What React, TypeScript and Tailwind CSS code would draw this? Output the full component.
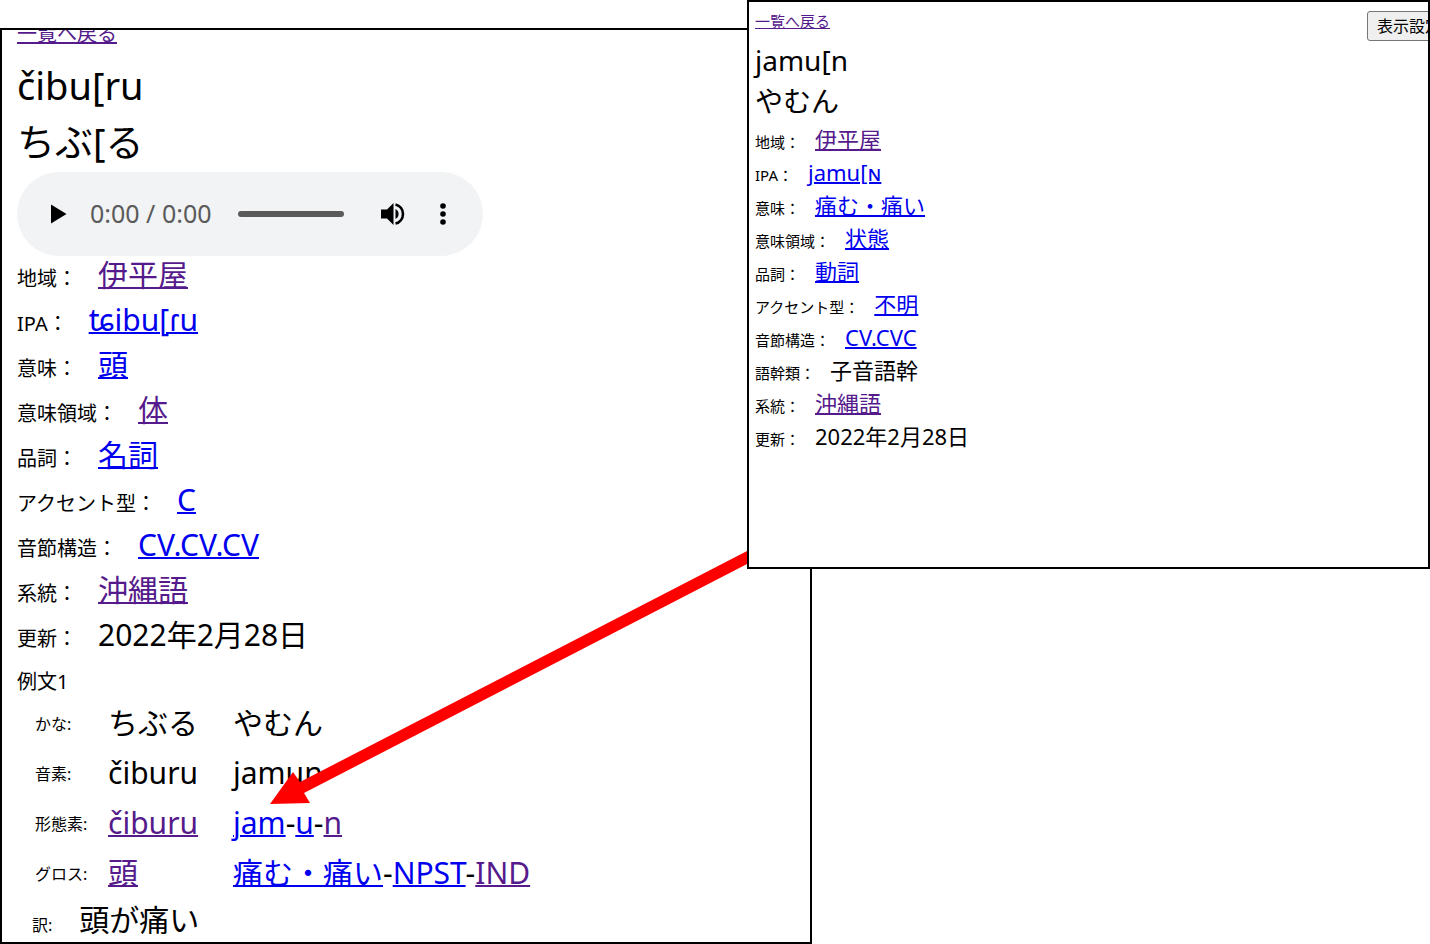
import React from "react";
import clsx from "clsx";

type Entry = {
  label: string;
  value: string;
  link?: "new" | "visited";
};

const chiburuEntries: Entry[] = [
  { label: "地域", value: "伊平屋", link: "visited" },
  { label: "IPA", value: "ʨibu[ɾu", link: "new" },
  { label: "意味", value: "頭", link: "new" },
  { label: "意味領域", value: "体", link: "visited" },
  { label: "品詞", value: "名詞", link: "new" },
  { label: "アクセント型", value: "C", link: "new" },
  { label: "音節構造", value: "CV.CV.CV", link: "new" },
  { label: "系統", value: "沖縄語", link: "visited" },
  { label: "更新", value: "2022年2月28日" },
];

const jamunEntries: Entry[] = [
  { label: "地域", value: "伊平屋", link: "visited" },
  { label: "IPA", value: "jamu[ɴ", link: "new" },
  { label: "意味", value: "痛む・痛い", link: "new" },
  { label: "意味領域", value: "状態", link: "new" },
  { label: "品詞", value: "動詞", link: "new" },
  { label: "アクセント型", value: "不明", link: "new" },
  { label: "音節構造", value: "CV.CVC", link: "new" },
  { label: "語幹類", value: "子音語幹" },
  { label: "系統", value: "沖縄語", link: "visited" },
  { label: "更新", value: "2022年2月28日" },
];

const WordLink = ({
  children,
  visited = false,
}: {
  children: React.ReactNode;
  visited?: boolean;
}) => (
  <a
    href="#"
    className={clsx("underline", visited ? "text-[#551a8b]" : "text-[#0000ee]")}
  >
    {children}
  </a>
);

const EntryList = ({
  entries,
  large = false,
}: {
  entries: Entry[];
  large?: boolean;
}) => (
  <dl className="[&_a]:decoration-2">
    {entries.map(({ label, value, link }) => (
      <div
        key={label}
        className={clsx(
          "flex items-baseline whitespace-nowrap",
          large
            ? "h-[45px] gap-[21px] leading-[45px]"
            : "h-[33px] gap-[15px] leading-[33px]"
        )}
      >
        <dt className={large ? "text-[20px]" : "text-[15px]"}>{label}：</dt>
        <dd className={large ? "text-[30px]" : "text-[22px]"}>
          {link ? (
            <WordLink visited={link === "visited"}>{value}</WordLink>
          ) : (
            value
          )}
        </dd>
      </div>
    ))}
  </dl>
);

const AudioPlayer = () => (
  <div className="flex h-[84px] w-[466px] items-center rounded-full bg-[#f1f3f4]">
    <button type="button" aria-label="再生" className="ml-[34px]">
      <svg width="16" height="20" viewBox="0 0 16 20">
        <path d="M0 0.5L15.5 10L0 19.5Z" fill="#000" />
      </svg>
    </button>
    <span className="ml-[23px] w-[148px] whitespace-nowrap pb-[3px] text-[25px] leading-[28px] text-[#5a5a5a]">
      0:00 / 0:00
    </span>
    <input
      type="range"
      aria-label="再生位置"
      min={0}
      max={100}
      defaultValue={0}
      className="h-[6px] w-[106px] appearance-none rounded-full bg-[#5a5a5a] [&::-webkit-slider-thumb]:appearance-none"
    />
    <button type="button" aria-label="音量" className="ml-[37px]">
      <svg width="25" height="24" viewBox="0 0 25 24">
        <path d="M0 7.5H6L12.5 1V23L6 16.5H0Z" fill="#000" />
        <path d="M14.5 7A5.6 5.6 0 0 1 14.5 17Z" fill="#000" />
        <path
          d="M14.5 2.4A9.9 9.9 0 0 1 14.5 21.6"
          fill="none"
          stroke="#000"
          strokeWidth="2.6"
        />
      </svg>
    </button>
    <button type="button" aria-label="メニュー" className="ml-[34px]">
      <svg width="6" height="22" viewBox="0 0 6 22">
        <circle cx="3" cy="3" r="2.8" fill="#000" />
        <circle cx="3" cy="11" r="2.8" fill="#000" />
        <circle cx="3" cy="19" r="2.8" fill="#000" />
      </svg>
    </button>
  </div>
);

const GlossTable = () => (
  <table className="ml-[18px] text-left text-[30px] whitespace-nowrap [&_a]:decoration-2 [&_td]:p-0 [&_th]:p-0 [&_th]:pt-1 [&_th]:text-[16px] [&_th]:font-normal">
    <tbody>
      <tr className="h-[50px]">
        <th scope="row" className="w-[73px]">かな:</th>
        <td className="w-[125px]">ちぶる</td>
        <td>やむん</td>
      </tr>
      <tr className="h-[50px]">
        <th scope="row">音素:</th>
        <td>čiburu</td>
        <td>jamun</td>
      </tr>
      <tr className="h-[50px]">
        <th scope="row">形態素:</th>
        <td>
          <WordLink visited>čiburu</WordLink>
        </td>
        <td>
          <WordLink>jam</WordLink>-<WordLink>u</WordLink>-
          <WordLink visited>n</WordLink>
        </td>
      </tr>
      <tr className="h-[50px]">
        <th scope="row">グロス:</th>
        <td>
          <WordLink visited>頭</WordLink>
        </td>
        <td>
          <WordLink>痛む・痛い</WordLink>-<WordLink>NPST</WordLink>-
          <WordLink visited>IND</WordLink>
        </td>
      </tr>
    </tbody>
  </table>
);

const Arrow = () => (
  <svg
    className="pointer-events-none absolute right-[61px] top-[519px]"
    width="480"
    height="256"
    viewBox="0 0 480 256"
    aria-hidden="true"
  >
    <path d="M480 1L31 233L24 223L1 255L41 254L35 244L480 14Z" fill="#f00" />
  </svg>
);

const App = () => {
  return (
    <main
      lang="ja"
      className="grid grid-cols-[747fr_65fr_618fr] items-start bg-white text-black font-['Noto_Sans','Noto_Sans_CJK_JP',sans-serif]"
    >
      <section className="relative col-span-2 col-start-1 row-start-1 mt-7 overflow-hidden border-2 border-black bg-white pl-[15px]">
        <nav className="-mt-[10px] h-[37px] text-[20px] leading-[28px]">
          <WordLink visited>一覧へ戻る</WordLink>
        </nav>
        <h1 className="mb-[3px] text-[38px] leading-[56px]">
          čibu[ru
          <br />
          ちぶ[る
        </h1>
        <AudioPlayer />
        <div className="-mt-1">
          <EntryList entries={chiburuEntries} large />
        </div>
        <h2 className="h-[40px] text-[20px] leading-[50px]">例文1</h2>
        <GlossTable />
        <p className="ml-[15px] flex h-[45px] items-baseline gap-[27px] text-[30px] leading-[46px]">
          <span className="text-[16px]">訳:</span>
          <span>頭が痛い</span>
        </p>
        <Arrow />
      </section>

      <section className="relative col-span-2 col-start-2 row-start-1 overflow-hidden border-2 border-black bg-white pb-[114px] pl-[6px]">
        <div className="flex h-[38px] items-start justify-between pt-[9px]">
          <nav className="text-[15px] leading-[20px]">
            <WordLink visited>一覧へ戻る</WordLink>
          </nav>
          <button
            type="button"
            className="-mr-[23px] h-[30px] w-[84px] shrink-0 whitespace-nowrap rounded-[3px] border border-[#767676] bg-[#efefef] text-[16px]"
          >
            表示設定
          </button>
        </div>
        <h1 className="mb-px text-[28px] leading-[41px]">
          jamu[n
          <br />
          やむん
        </h1>
        <EntryList entries={jamunEntries} />
      </section>
    </main>
  );
};

export default App;
